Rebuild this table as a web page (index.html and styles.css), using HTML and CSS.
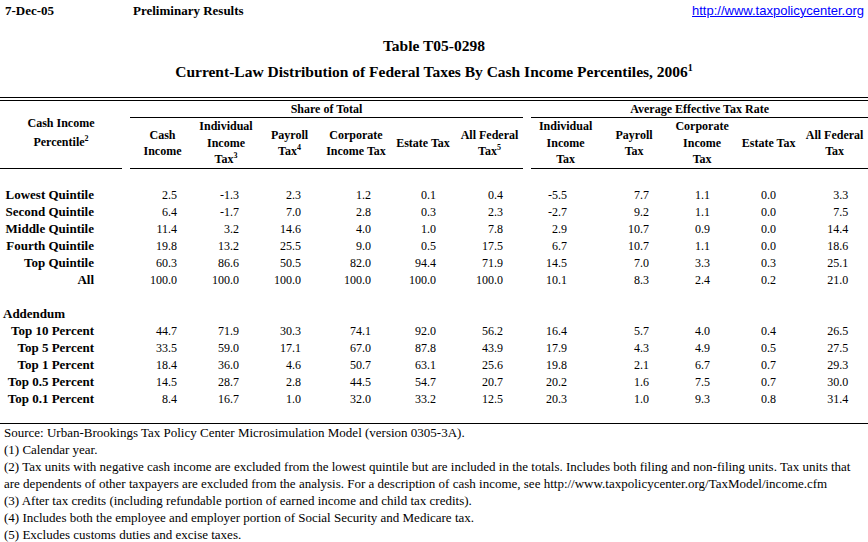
FILE: index.html
```html
<!DOCTYPE html>
<html>
<head>
<meta charset="utf-8">
<title>Table T05-0298</title>
<link rel="stylesheet" href="styles.css">
</head>
<body>
<div class="topbar">
  <span class="date">7-Dec-05</span>
  <span class="prelim">Preliminary Results</span>
  <a class="link" href="#">http://www.taxpolicycenter.org</a>
</div>
<div class="titles">
  <div class="t1">Table T05-0298</div>
  <div class="t2">Current-Law Distribution of Federal Taxes By Cash Income Percentiles, 2006<sup class="tsup">1</sup></div>
</div>
<div class="dbl"></div>
<table class="dist">
  <colgroup>
    <col class="w-lab"><col class="w-gap">
    <col class="w65"><col class="w62"><col class="w65"><col class="w68"><col class="w66"><col class="w67">
    <col class="w-gap">
    <col class="w69"><col class="w68"><col class="w68"><col class="w65"><col class="w67">
  </colgroup>
  <thead>
    <tr class="grp">
      <th rowspan="2" class="lab">Cash Income<br>Percentile<sup>2</sup></th>
      <th rowspan="2" class="g"></th>
      <th colspan="6" class="gh">Share of Total</th>
      <th rowspan="2" class="g"></th>
      <th colspan="5" class="gh">Average Effective Tax Rate</th>
    </tr>
    <tr class="sub">
      <th>Cash<br>Income</th>
      <th>Individual<br>Income<br>Tax<sup>3</sup></th>
      <th>Payroll<br>Tax<sup>4</sup></th>
      <th>Corporate<br>Income Tax</th>
      <th>Estate Tax</th>
      <th>All Federal<br>Tax<sup>5</sup></th>
      <th>Individual<br>Income<br>Tax</th>
      <th>Payroll<br>Tax</th>
      <th>Corporate<br>Income<br>Tax</th>
      <th>Estate Tax</th>
      <th>All Federal<br>Tax</th>
    </tr>
  </thead>
  <tbody>
    <tr class="sp"><td colspan="14"></td></tr>
    <tr><th>Lowest Quintile</th><td class="g"></td><td>2.5</td><td>-1.3</td><td>2.3</td><td>1.2</td><td>0.1</td><td>0.4</td><td class="g"></td><td>-5.5</td><td>7.7</td><td>1.1</td><td>0.0</td><td>3.3</td></tr>
    <tr><th>Second Quintile</th><td class="g"></td><td>6.4</td><td>-1.7</td><td>7.0</td><td>2.8</td><td>0.3</td><td>2.3</td><td class="g"></td><td>-2.7</td><td>9.2</td><td>1.1</td><td>0.0</td><td>7.5</td></tr>
    <tr><th>Middle Quintile</th><td class="g"></td><td>11.4</td><td>3.2</td><td>14.6</td><td>4.0</td><td>1.0</td><td>7.8</td><td class="g"></td><td>2.9</td><td>10.7</td><td>0.9</td><td>0.0</td><td>14.4</td></tr>
    <tr><th>Fourth Quintile</th><td class="g"></td><td>19.8</td><td>13.2</td><td>25.5</td><td>9.0</td><td>0.5</td><td>17.5</td><td class="g"></td><td>6.7</td><td>10.7</td><td>1.1</td><td>0.0</td><td>18.6</td></tr>
    <tr><th>Top Quintile</th><td class="g"></td><td>60.3</td><td>86.6</td><td>50.5</td><td>82.0</td><td>94.4</td><td>71.9</td><td class="g"></td><td>14.5</td><td>7.0</td><td>3.3</td><td>0.3</td><td>25.1</td></tr>
    <tr><th>All</th><td class="g"></td><td>100.0</td><td>100.0</td><td>100.0</td><td>100.0</td><td>100.0</td><td>100.0</td><td class="g"></td><td>10.1</td><td>8.3</td><td>2.4</td><td>0.2</td><td>21.0</td></tr>
    <tr class="sp"><td colspan="14"></td></tr>
    <tr><th class="addendum">Addendum</th><td class="g"></td><td></td><td></td><td></td><td></td><td></td><td></td><td class="g"></td><td></td><td></td><td></td><td></td><td></td></tr>
    <tr><th>Top 10 Percent</th><td class="g"></td><td>44.7</td><td>71.9</td><td>30.3</td><td>74.1</td><td>92.0</td><td>56.2</td><td class="g"></td><td>16.4</td><td>5.7</td><td>4.0</td><td>0.4</td><td>26.5</td></tr>
    <tr><th>Top 5 Percent</th><td class="g"></td><td>33.5</td><td>59.0</td><td>17.1</td><td>67.0</td><td>87.8</td><td>43.9</td><td class="g"></td><td>17.9</td><td>4.3</td><td>4.9</td><td>0.5</td><td>27.5</td></tr>
    <tr><th>Top 1 Percent</th><td class="g"></td><td>18.4</td><td>36.0</td><td>4.6</td><td>50.7</td><td>63.1</td><td>25.6</td><td class="g"></td><td>19.8</td><td>2.1</td><td>6.7</td><td>0.7</td><td>29.3</td></tr>
    <tr><th>Top 0.5 Percent</th><td class="g"></td><td>14.5</td><td>28.7</td><td>2.8</td><td>44.5</td><td>54.7</td><td>20.7</td><td class="g"></td><td>20.2</td><td>1.6</td><td>7.5</td><td>0.7</td><td>30.0</td></tr>
    <tr><th>Top 0.1 Percent</th><td class="g"></td><td>8.4</td><td>16.7</td><td>1.0</td><td>32.0</td><td>33.2</td><td>12.5</td><td class="g"></td><td>20.3</td><td>1.0</td><td>9.3</td><td>0.8</td><td>31.4</td></tr>
    <tr class="sp last"><td colspan="14"></td></tr>
  </tbody>
</table>
<div class="notes">
  <p>Source: Urban-Brookings Tax Policy Center Microsimulation Model (version 0305-3A).</p>
  <p>(1) Calendar year.</p>
  <p>(2) Tax units with negative cash income are excluded from the lowest quintile but are included in the totals. Includes both filing and non-filing units. Tax units that</p>
  <p>are dependents of other taxpayers are excluded from the analysis. For a description of cash income, see http://www.taxpolicycenter.org/TaxModel/income.cfm</p>
  <p>(3) After tax credits (including refundable portion of earned income and child tax credits).</p>
  <p>(4) Includes both the employee and employer portion of Social Security and Medicare tax.</p>
  <p>(5) Excludes customs duties and excise taxes.</p>
</div>
</body>
</html>
```

FILE: styles.css
```css
html, body {
  margin: 0;
  padding: 0;
  background: #ffffff;
  color: #000000;
  overflow: hidden;
}
body {
  width: 868px;
  font-family: "Liberation Serif", "Times New Roman", serif;
  font-size: 12px;
}

.topbar {
  display: flex;
  align-items: center;
  height: 19px;
  padding-top: 1px;
  box-sizing: border-box;
  font-weight: bold;
  font-size: 13px;
  line-height: 17px;
}
.date {
  width: 128px;
  padding-left: 5px;
}
.prelim {
  flex: none;
}
.link {
  margin-left: auto;
  margin-right: 4px;
  font-family: "Liberation Sans", Arial, sans-serif;
  font-weight: normal;
  font-size: 13px;
  color: #0000ff;
  text-decoration: underline;
}

.titles {
  padding-top: 17px;
  padding-bottom: 15px;
  text-align: center;
  font-weight: bold;
  font-size: 15.5px;
  line-height: 20px;
}
.t2 {
  margin-top: 6px;
}
.tsup {
  font-size: 10px;
  vertical-align: 6px;
  line-height: 0;
}

.dbl {
  height: 2px;
  border-top: 1px solid #000;
  border-bottom: 1px solid #000;
}

.dist {
  width: 868px;
  table-layout: fixed;
  border-collapse: separate;
  border-spacing: 0;
  font-size: 12px;
}
.w-lab { width: 122px; }
.w-gap { width: 8px; }
.w62 { width: 62px; }
.w65 { width: 65px; }
.w66 { width: 66px; }
.w67 { width: 67px; }
.w68 { width: 68px; }
.w69 { width: 69px; }

.dist th, .dist td {
  padding: 0;
  white-space: nowrap;
}
.dist sup {
  font-size: 8px;
  vertical-align: 5px;
  line-height: 0;
}

.grp th {
  height: 15px;
  line-height: 15px;
  text-align: center;
  vertical-align: middle;
}
.grp .gh {
  padding-top: 1px;
  height: 14px;
  border-bottom: 1px solid #000;
}
.grp .lab {
  line-height: 19px;
  border-bottom: 1px solid #000;
  padding-bottom: 3px;
}
.sub th {
  height: 50px;
  line-height: 16.5px;
  text-align: center;
  vertical-align: middle;
  border-bottom: 1px solid #000;
}

.dist tbody tr {
  height: 17px;
}
.dist tbody th {
  height: 16px;
  text-align: right;
  padding-top: 1px;
  padding-right: 28px;
  font-size: 13px;
  line-height: 16px;
}
.dist tbody th.addendum {
  text-align: left;
  padding-left: 3px;
  padding-right: 0;
}
.dist tbody td {
  height: 16px;
  text-align: right;
  line-height: 16px;
  padding-top: 1px;
}
.dist tbody tr.sp td {
  height: 17px;
  padding-top: 0;
}
.dist tbody tr.sp.last td {
  height: 16px;
}
.dist tbody tr.sp.last {
  height: 16px;
}

.dist tbody td:nth-child(3) { padding-right: 18px; }
.dist tbody td:nth-child(4) { padding-right: 18px; }
.dist tbody td:nth-child(5) { padding-right: 21px; }
.dist tbody td:nth-child(6) { padding-right: 19px; }
.dist tbody td:nth-child(7) { padding-right: 20px; }
.dist tbody td:nth-child(8) { padding-right: 20px; }
.dist tbody td:nth-child(10) { padding-right: 33px; }
.dist tbody td:nth-child(11) { padding-right: 19px; }
.dist tbody td:nth-child(12) { padding-right: 26px; }
.dist tbody td:nth-child(13) { padding-right: 25px; }
.dist tbody td:nth-child(14) { padding-right: 20px; }

.notes {
  border-top: 1px solid #000;
  padding-left: 4px;
  overflow: hidden;
  font-size: 13px;
}
.notes p {
  margin: 0;
  height: 16px;
  padding-top: 1px;
  line-height: 16px;
  white-space: nowrap;
}
```
